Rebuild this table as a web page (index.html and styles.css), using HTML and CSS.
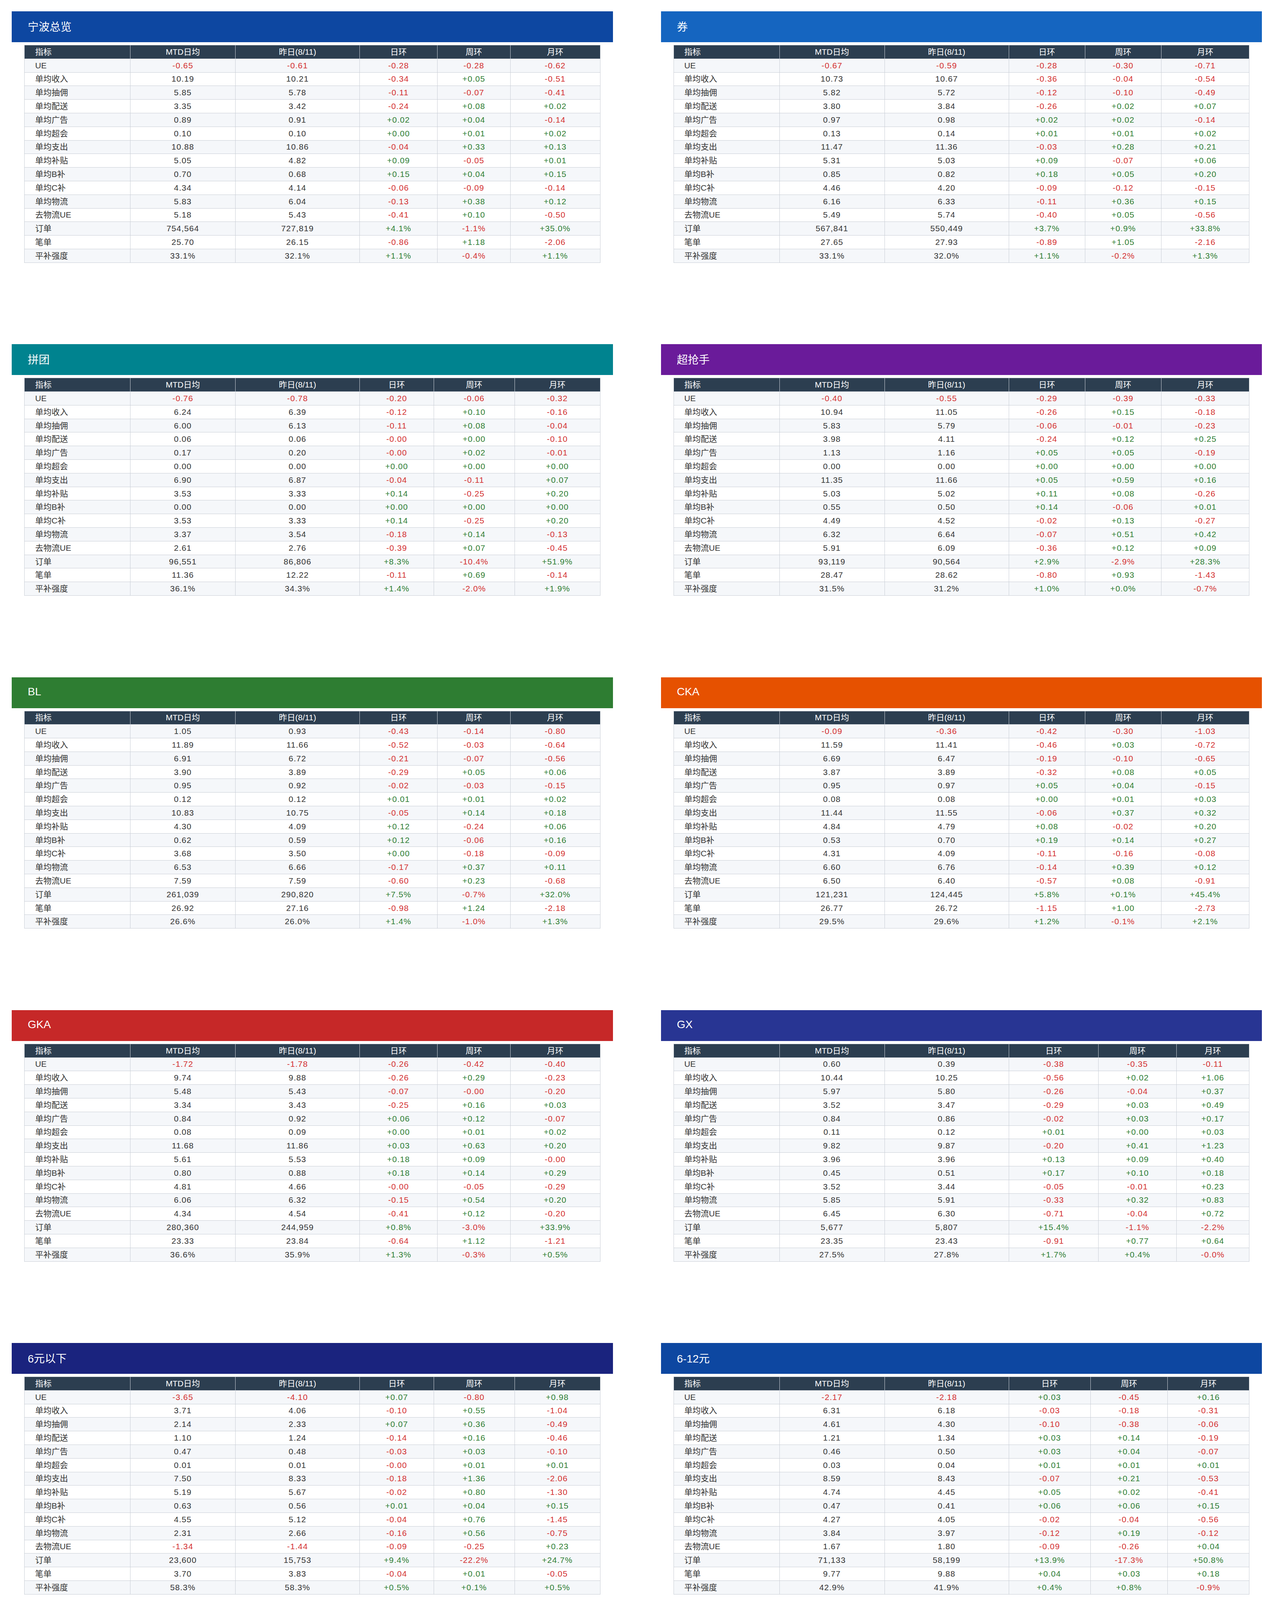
FILE: index.html
```html
<!DOCTYPE html>
<html lang="zh-CN">
<head>
<meta charset="utf-8">
<title>宁波 UE 日报</title>
<link rel="stylesheet" href="styles.css">
</head>
<body>
<main class="grid" id="grid"></main>
<script src="app.js"></script>
</body>
</html>
```
FILE: styles.css
```css
html, body {
  margin: 0;
  background: #ffffff;
}
body {
  padding: 29px 31px 0 30px;
  font-family: "Liberation Sans", "Noto Sans CJK SC", sans-serif;
  color: #333333;
}
.grid {
  display: grid;
  grid-template-columns: 1fr 1fr;
  column-gap: 123px;
  row-gap: 208.5px;
}
.banner {
  height: 79px;
  box-sizing: border-box;
  display: flex;
  align-items: center;
  padding: 0 0 4px 41px;
  margin-bottom: 7px;
  color: #ffffff;
  font-size: 28px;
}
.table-wrap {
  padding: 0 32px 0 32px;
}
.ue-table {
  width: 100%;
  border-collapse: collapse;
  font-size: 21px;
}
.ue-table th,
.ue-table td {
  border: 1px solid #c9ced6;
  padding: 0 8px;
  height: 34.8px;
  line-height: 26px;
  text-align: center;
  white-space: nowrap;
  box-sizing: border-box;
}
.ue-table th {
  background: #2c3e50;
  color: #ffffff;
  font-weight: normal;
}
.ue-table .c-name {
  width: 271px;
  text-align: left;
  padding-left: 27px;
}
.ue-table .c-mtd { width: 269px; }
.ue-table .c-yest { width: 318px; }
.ue-table td.num { letter-spacing: 1.1px; }
.ue-table tbody tr:nth-child(odd) td { background: #f5f7fa; }
.ue-table tbody tr:nth-child(even) td { background: #ffffff; }
.neg { color: #d32f2f; }
.pos { color: #2e7d32; }

.bg-nb { background: #0d47a1; }
.bg-quan { background: #1565c0; }
.bg-pt { background: #00838f; }
.bg-cqs { background: #6a1b9a; }
.bg-bl { background: #2e7d32; }
.bg-cka { background: #e65100; }
.bg-gka { background: #c62828; }
.bg-gx { background: #283593; }
.bg-p6 { background: #1a237e; }
.bg-p12 { background: #0d47a1; }
.bg-p15 { background: #01579b; }
.bg-p20 { background: #006064; }
.bg-p25 { background: #004d40; }
.bg-p30 { background: #1b5e20; }
.bg-p99 { background: #33691e; }
```
FILE: app.js
```javascript
(function () {
  var LABELS = ['UE', '单均收入', '单均抽佣', '单均配送', '单均广告', '单均超会', '单均支出',
    '单均补贴', '单均B补', '单均C补', '单均物流', '去物流UE', '订单', '笔单', '平补强度'];
  var HEAD = ['指标', 'MTD日均', '昨日(8/11)', '日环', '周环', '月环'];
  var HEAD_CLS = ['c-name', 'c-mtd', 'c-yest', 'c-d', 'c-w', 'c-m'];

  var SECTIONS = [
    ['宁波总览', 'nb', [
      '-0.65 -0.61 -0.28 -0.28 -0.62',
      '10.19 10.21 -0.34 +0.05 -0.51',
      '5.85 5.78 -0.11 -0.07 -0.41',
      '3.35 3.42 -0.24 +0.08 +0.02',
      '0.89 0.91 +0.02 +0.04 -0.14',
      '0.10 0.10 +0.00 +0.01 +0.02',
      '10.88 10.86 -0.04 +0.33 +0.13',
      '5.05 4.82 +0.09 -0.05 +0.01',
      '0.70 0.68 +0.15 +0.04 +0.15',
      '4.34 4.14 -0.06 -0.09 -0.14',
      '5.83 6.04 -0.13 +0.38 +0.12',
      '5.18 5.43 -0.41 +0.10 -0.50',
      '754,564 727,819 +4.1% -1.1% +35.0%',
      '25.70 26.15 -0.86 +1.18 -2.06',
      '33.1% 32.1% +1.1% -0.4% +1.1%']],
    ['券', 'quan', [
      '-0.67 -0.59 -0.28 -0.30 -0.71',
      '10.73 10.67 -0.36 -0.04 -0.54',
      '5.82 5.72 -0.12 -0.10 -0.49',
      '3.80 3.84 -0.26 +0.02 +0.07',
      '0.97 0.98 +0.02 +0.02 -0.14',
      '0.13 0.14 +0.01 +0.01 +0.02',
      '11.47 11.36 -0.03 +0.28 +0.21',
      '5.31 5.03 +0.09 -0.07 +0.06',
      '0.85 0.82 +0.18 +0.05 +0.20',
      '4.46 4.20 -0.09 -0.12 -0.15',
      '6.16 6.33 -0.11 +0.36 +0.15',
      '5.49 5.74 -0.40 +0.05 -0.56',
      '567,841 550,449 +3.7% +0.9% +33.8%',
      '27.65 27.93 -0.89 +1.05 -2.16',
      '33.1% 32.0% +1.1% -0.2% +1.3%']],
    ['拼团', 'pt', [
      '-0.76 -0.78 -0.20 -0.06 -0.32',
      '6.24 6.39 -0.12 +0.10 -0.16',
      '6.00 6.13 -0.11 +0.08 -0.04',
      '0.06 0.06 -0.00 +0.00 -0.10',
      '0.17 0.20 -0.00 +0.02 -0.01',
      '0.00 0.00 +0.00 +0.00 +0.00',
      '6.90 6.87 -0.04 -0.11 +0.07',
      '3.53 3.33 +0.14 -0.25 +0.20',
      '0.00 0.00 +0.00 +0.00 +0.00',
      '3.53 3.33 +0.14 -0.25 +0.20',
      '3.37 3.54 -0.18 +0.14 -0.13',
      '2.61 2.76 -0.39 +0.07 -0.45',
      '96,551 86,806 +8.3% -10.4% +51.9%',
      '11.36 12.22 -0.11 +0.69 -0.14',
      '36.1% 34.3% +1.4% -2.0% +1.9%']],
    ['超抢手', 'cqs', [
      '-0.40 -0.55 -0.29 -0.39 -0.33',
      '10.94 11.05 -0.26 +0.15 -0.18',
      '5.83 5.79 -0.06 -0.01 -0.23',
      '3.98 4.11 -0.24 +0.12 +0.25',
      '1.13 1.16 +0.05 +0.05 -0.19',
      '0.00 0.00 +0.00 +0.00 +0.00',
      '11.35 11.66 +0.05 +0.59 +0.16',
      '5.03 5.02 +0.11 +0.08 -0.26',
      '0.55 0.50 +0.14 -0.06 +0.01',
      '4.49 4.52 -0.02 +0.13 -0.27',
      '6.32 6.64 -0.07 +0.51 +0.42',
      '5.91 6.09 -0.36 +0.12 +0.09',
      '93,119 90,564 +2.9% -2.9% +28.3%',
      '28.47 28.62 -0.80 +0.93 -1.43',
      '31.5% 31.2% +1.0% +0.0% -0.7%']],
    ['BL', 'bl', [
      '1.05 0.93 -0.43 -0.14 -0.80',
      '11.89 11.66 -0.52 -0.03 -0.64',
      '6.91 6.72 -0.21 -0.07 -0.56',
      '3.90 3.89 -0.29 +0.05 +0.06',
      '0.95 0.92 -0.02 -0.03 -0.15',
      '0.12 0.12 +0.01 +0.01 +0.02',
      '10.83 10.75 -0.05 +0.14 +0.18',
      '4.30 4.09 +0.12 -0.24 +0.06',
      '0.62 0.59 +0.12 -0.06 +0.16',
      '3.68 3.50 +0.00 -0.18 -0.09',
      '6.53 6.66 -0.17 +0.37 +0.11',
      '7.59 7.59 -0.60 +0.23 -0.68',
      '261,039 290,820 +7.5% -0.7% +32.0%',
      '26.92 27.16 -0.98 +1.24 -2.18',
      '26.6% 26.0% +1.4% -1.0% +1.3%']],
    ['CKA', 'cka', [
      '-0.09 -0.36 -0.42 -0.30 -1.03',
      '11.59 11.41 -0.46 +0.03 -0.72',
      '6.69 6.47 -0.19 -0.10 -0.65',
      '3.87 3.89 -0.32 +0.08 +0.05',
      '0.95 0.97 +0.05 +0.04 -0.15',
      '0.08 0.08 +0.00 +0.01 +0.03',
      '11.44 11.55 -0.06 +0.37 +0.32',
      '4.84 4.79 +0.08 -0.02 +0.20',
      '0.53 0.70 +0.19 +0.14 +0.27',
      '4.31 4.09 -0.11 -0.16 -0.08',
      '6.60 6.76 -0.14 +0.39 +0.12',
      '6.50 6.40 -0.57 +0.08 -0.91',
      '121,231 124,445 +5.8% +0.1% +45.4%',
      '26.77 26.72 -1.15 +1.00 -2.73',
      '29.5% 29.6% +1.2% -0.1% +2.1%']],
    ['GKA', 'gka', [
      '-1.72 -1.78 -0.26 -0.42 -0.40',
      '9.74 9.88 -0.26 +0.29 -0.23',
      '5.48 5.43 -0.07 -0.00 -0.20',
      '3.34 3.43 -0.25 +0.16 +0.03',
      '0.84 0.92 +0.06 +0.12 -0.07',
      '0.08 0.09 +0.00 +0.01 +0.02',
      '11.68 11.86 +0.03 +0.63 +0.20',
      '5.61 5.53 +0.18 +0.09 -0.00',
      '0.80 0.88 +0.18 +0.14 +0.29',
      '4.81 4.66 -0.00 -0.05 -0.29',
      '6.06 6.32 -0.15 +0.54 +0.20',
      '4.34 4.54 -0.41 +0.12 -0.20',
      '280,360 244,959 +0.8% -3.0% +33.9%',
      '23.33 23.84 -0.64 +1.12 -1.21',
      '36.6% 35.9% +1.3% -0.3% +0.5%']],
    ['GX', 'gx', [
      '0.60 0.39 -0.38 -0.35 -0.11',
      '10.44 10.25 -0.56 +0.02 +1.06',
      '5.97 5.80 -0.26 -0.04 +0.37',
      '3.52 3.47 -0.29 +0.03 +0.49',
      '0.84 0.86 -0.02 +0.03 +0.17',
      '0.11 0.12 +0.01 +0.00 +0.03',
      '9.82 9.87 -0.20 +0.41 +1.23',
      '3.96 3.96 +0.13 +0.09 +0.40',
      '0.45 0.51 +0.17 +0.10 +0.18',
      '3.52 3.44 -0.05 -0.01 +0.23',
      '5.85 5.91 -0.33 +0.32 +0.83',
      '6.45 6.30 -0.71 -0.04 +0.72',
      '5,677 5,807 +15.4% -1.1% -2.2%',
      '23.35 23.43 -0.91 +0.77 +0.64',
      '27.5% 27.8% +1.7% +0.4% -0.0%']],
    ['6元以下', 'p6', [
      '-3.65 -4.10 +0.07 -0.80 +0.98',
      '3.71 4.06 -0.10 +0.55 -1.04',
      '2.14 2.33 +0.07 +0.36 -0.49',
      '1.10 1.24 -0.14 +0.16 -0.46',
      '0.47 0.48 -0.03 +0.03 -0.10',
      '0.01 0.01 -0.00 +0.01 +0.01',
      '7.50 8.33 -0.18 +1.36 -2.06',
      '5.19 5.67 -0.02 +0.80 -1.30',
      '0.63 0.56 +0.01 +0.04 +0.15',
      '4.55 5.12 -0.04 +0.76 -1.45',
      '2.31 2.66 -0.16 +0.56 -0.75',
      '-1.34 -1.44 -0.09 -0.25 +0.23',
      '23,600 15,753 +9.4% -22.2% +24.7%',
      '3.70 3.83 -0.04 +0.01 -0.05',
      '58.3% 58.3% +0.5% +0.1% +0.5%']],
    ['6-12元', 'p12', [
      '-2.17 -2.18 +0.03 -0.45 +0.16',
      '6.31 6.18 -0.03 -0.18 -0.31',
      '4.61 4.30 -0.10 -0.38 -0.06',
      '1.21 1.34 +0.03 +0.14 -0.19',
      '0.46 0.50 +0.03 +0.04 -0.07',
      '0.03 0.04 +0.01 +0.01 +0.01',
      '8.59 8.43 -0.07 +0.21 -0.53',
      '4.74 4.45 +0.05 +0.02 -0.41',
      '0.47 0.41 +0.06 +0.06 +0.15',
      '4.27 4.05 -0.02 -0.04 -0.56',
      '3.84 3.97 -0.12 +0.19 -0.12',
      '1.67 1.80 -0.09 -0.26 +0.04',
      '71,133 58,199 +13.9% -17.3% +50.8%',
      '9.77 9.88 +0.04 +0.03 +0.18',
      '42.9% 41.9% +0.4% +0.8% -0.9%']],
    ['12-15元', 'p15', [
      '-1.06 -1.16 -0.15 -0.32 -0.52',
      '8.08 7.95 -0.05 -0.22 -0.26',
      '5.14 5.20 -0.15 -0.00 -0.04',
      '2.17 2.01 +0.06 -0.22 -0.15',
      '0.67 0.64 +0.02 -0.02 -0.08',
      '0.09 0.10 +0.01 +0.01 +0.02',
      '9.36 9.27 +0.08 +0.02 +0.21',
      '4.02 3.89 +0.16 -0.12 +0.22',
      '0.50 0.46 +0.08 +0.01 +0.15',
      '3.52 3.42 +0.08 -0.12 +0.06',
      '5.34 5.39 -0.08 +0.14 -0.00',
      '4.28 4.23 -0.23 -0.18 -0.52',
      '88,815 84,082 +12.4% -7.0% +43.0%',
      '13.74 13.73 -0.02 -0.01 -0.06',
      '33.2% 32.8% +1.1% -0.0% +1.9%']],
    ['15-20元', 'p20', [
      '-0.67 -0.77 -0.17 -0.33 -0.52',
      '9.07 8.90 -0.16 -0.22 -0.13',
      '4.56 4.51 -0.04 -0.10 -0.06',
      '3.48 3.38 -0.12 -0.13 -0.01',
      '0.89 0.88 +0.00 +0.01 -0.08',
      '0.13 0.14 +0.00 +0.01 +0.03',
      '10.01 10.02 +0.02 +0.25 +0.41',
      '3.80 3.68 +0.16 -0.10 +0.18',
      '0.65 0.66 +0.12 +0.03 +0.22',
      '3.15 3.03 +0.04 -0.12 -0.04',
      '6.21 6.34 -0.14 +0.34 +0.22',
      '5.54 5.57 -0.30 +0.01 -0.30',
      '172,608 166,331 +9.7% -2.5% +36.2%',
      '17.58 17.59 -0.02 +0.01 +0.03',
      '29.5% 29.3% +1.3% -0.0% +1.3%']],
    ['20-25元', 'p25', [
      '-0.77 -0.74 -0.32 -0.26 -0.59',
      '10.14 10.05 -0.24 -0.13 -0.21',
      '5.03 4.91 +0.01 -0.18 -0.17',
      '4.04 4.04 -0.27 +0.01 +0.06',
      '0.97 0.98 +0.02 +0.03 -0.12',
      '0.10 0.11 +0.00 +0.01 +0.02',
      '11.10 11.06 +0.10 +0.24 +0.38',
      '4.55 4.30 +0.22 -0.20 +0.19',
      '0.77 0.80 +0.19 +0.07 +0.26',
      '3.78 3.50 +0.04 -0.27 -0.08',
      '6.55 6.76 -0.12 +0.44 +0.19',
      '5.78 6.02 -0.44 +0.19 -0.39',
      '140,300 137,726 +4.1% -0.5% +47.1%',
      '22.53 22.51 -0.02 -0.01 -0.01',
      '31.0% 30.0% +1.6% -0.7% +1.3%']],
    ['25-30元', 'p30', [
      '-0.98 -0.87 -0.32 -0.32 -0.76',
      '10.91 10.80 -0.24 -0.24 -0.24',
      '5.75 5.58 +0.03 -0.30 -0.22',
      '4.07 4.11 -0.30 +0.02 +0.10',
      '1.00 1.01 +0.02 +0.03 -0.14',
      '0.10 0.10 +0.00 +0.01 +0.01',
      '11.96 11.78 +0.08 +0.13 +0.45',
      '5.58 5.25 +0.19 -0.19 +0.33',
      '0.84 0.79 +0.19 +0.03 +0.20',
      '4.75 4.46 +0.01 -0.22 +0.13',
      '6.37 6.53 -0.11 +0.33 +0.12',
      '5.40 5.66 -0.43 +0.00 -0.64',
      '94,087 92,687 -0.5% +3.9% +44.0%',
      '27.39 27.38 -0.02 +0.01 +0.00',
      '33.9% 32.7% +1.3% -0.3% +1.9%']],
    ['大于30元', 'p99', [
      '0.87 0.90 -0.27 -0.46 -0.80',
      '14.43 14.30 -0.20 -0.18 -0.54',
      '9.16 8.89 +0.05 -0.35 -0.62',
      '4.06 4.19 -0.31 +0.14 +0.29',
      '1.11 1.12 +0.06 +0.02 -0.22',
      '0.10 0.10 +0.00 +0.00 +0.01',
      '13.11 12.84 +0.07 +0.11 +0.26',
      '7.00 6.60 +0.13 -0.18 +0.06',
      '0.84 0.77 +0.21 -0.01 +0.01',
      '6.16 5.83 -0.08 -0.17 +0.05',
      '6.11 6.24 -0.06 +0.29 +0.20',
      '6.98 7.14 -0.33 -0.17 -0.59',
      '173,797 173,041 -4.7% +10.7% +16.2%',
      '50.69 50.14 +0.09 +0.29 -3.30',
      '32.7% 31.6% +0.7% -0.3% +1.0%']]
  ];

  function el(tag, cls, text) {
    var e = document.createElement(tag);
    if (cls) e.className = cls;
    if (text != null) e.textContent = text;
    return e;
  }

  var grid = document.getElementById('grid');
  SECTIONS.forEach(function (sec) {
    var panel = el('section', 'panel');
    panel.appendChild(el('div', 'banner bg-' + sec[1], sec[0]));
    var wrap = el('div', 'table-wrap');
    var table = el('table', 'ue-table');
    var thead = el('thead');
    var hr = el('tr');
    HEAD.forEach(function (h, i) { hr.appendChild(el('th', HEAD_CLS[i], h)); });
    thead.appendChild(hr);
    table.appendChild(thead);
    var tbody = el('tbody');
    sec[2].forEach(function (line, r) {
      var tr = el('tr');
      tr.appendChild(el('td', 'c-name', LABELS[r]));
      line.split(' ').forEach(function (v, i) {
        var cls = 'num';
        var neg = v.charAt(0) === '-';
        if (i < 2) {
          if (neg) cls += ' neg';
        } else {
          cls += neg ? ' neg' : ' pos';
        }
        tr.appendChild(el('td', cls, v));
      });
      tbody.appendChild(tr);
    });
    table.appendChild(tbody);
    wrap.appendChild(table);
    panel.appendChild(wrap);
    grid.appendChild(panel);
  });
})();
```
